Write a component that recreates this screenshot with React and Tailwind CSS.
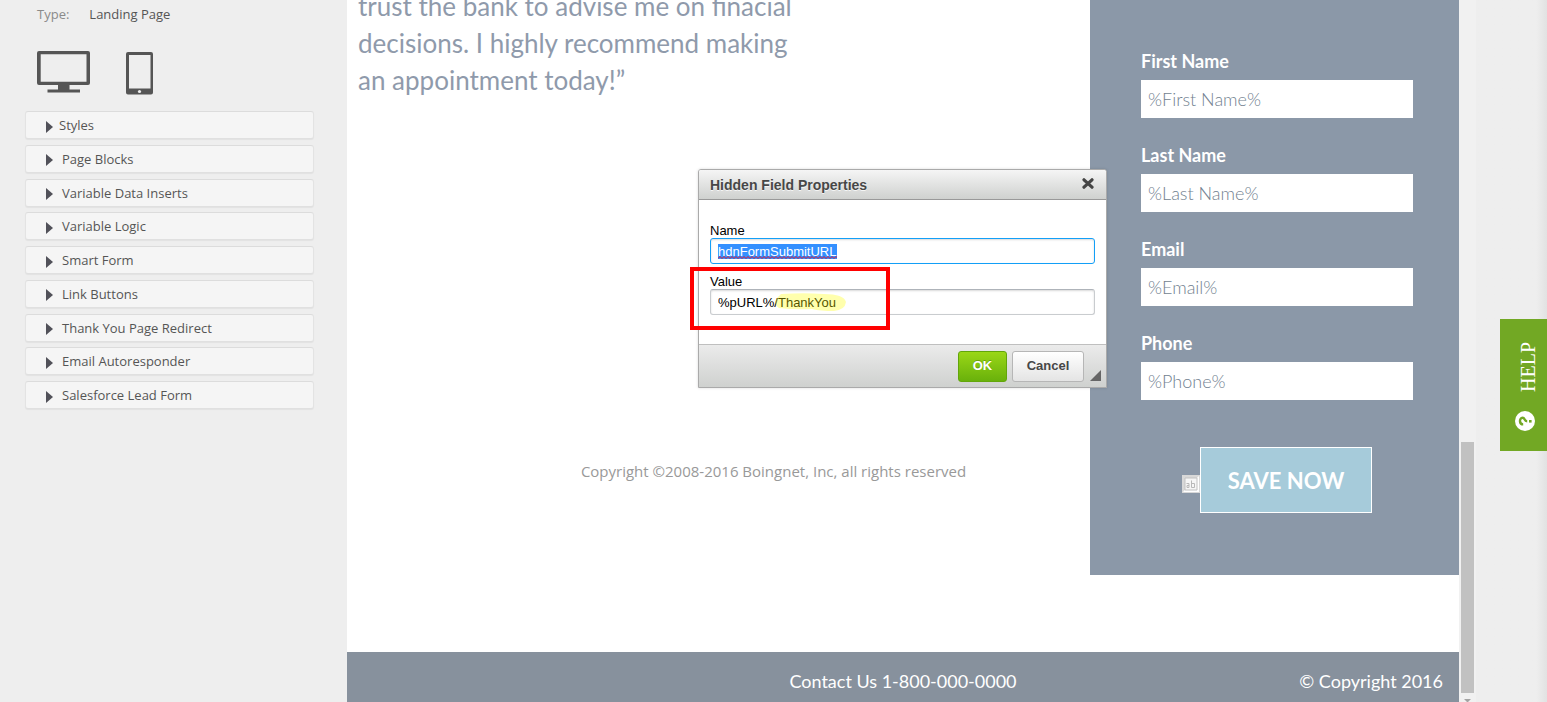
import { useEffect, useRef } from "react";

const blocks = [
  "Page Blocks",
  "Variable Data Inserts",
  "Variable Logic",
  "Smart Form",
  "Link Buttons",
  "Thank You Page Redirect",
  "Email Autoresponder",
  "Salesforce Lead Form",
];

const fields = [
  { id: "first", label: "First Name" },
  { id: "last", label: "Last Name" },
  { id: "email", label: "Email" },
  { id: "phone", label: "Phone" },
];

const squiggle = "M0 2.5" + "l2-2 2 2".repeat(30);

function BlockRow({ label, gap }) {
  return (
    <button
      type="button"
      className={`flex h-[28px] w-full items-center rounded-[3px] border border-t-[#dcdcdc] border-x-[#e3e3e3] border-b-[#e0e0e0] bg-[#f5f5f5] pl-5 text-left shadow-[0_1px_1px_rgba(0,0,0,0.05)] ${gap}`}
    >
      <svg className="mt-[3px] h-3 w-[7px]" viewBox="0 0 7 12" fill="#515159" aria-hidden="true">
        <path d="M0 0 7 6 0 12z" />
      </svg>
      <span>{label}</span>
    </button>
  );
}

function Sidebar() {
  return (
    <aside className="w-[347px] shrink-0 bg-[#eeeeee] pt-1 pr-[33px] pl-[25px] font-['Open_Sans',sans-serif] text-[13px] leading-5 text-[#555]">
      <dl className="flex gap-5 pl-3">
        <dt className="text-[#8a8a8a]">Type:</dt>
        <dd>Landing Page</dd>
      </dl>
      <div className="mt-[26px] flex items-start gap-9 pl-3">
        <button type="button" aria-label="Desktop view">
          <svg className="h-[45px] w-[53px]" viewBox="0 0 53 45" fill="#555">
            <path
              fillRule="evenodd"
              d="M2 1h49a2 2 0 0 1 2 2v30a2 2 0 0 1-2 2H32.500v4.500H43v3H10.500v-3H21v-4.500H2a2 2 0 0 1-2-2V3a2 2 0 0 1 2-2zM3.700 4.300v27.400h45.800V4.300z"
            />
          </svg>
        </button>
        <button type="button" aria-label="Mobile view">
          <svg className="h-[45px] w-[27px]" viewBox="0 0 27 45" fill="#555">
            <path
              fillRule="evenodd"
              d="M2 2h23a2 2 0 0 1 2 2v38.500a2 2 0 0 1-2 2H2a2 2 0 0 1-2-2V4a2 2 0 0 1 2-2zM3 5v33.500h21.500V5z"
            />
            <circle cx="13.500" cy="41.500" r="1.600" fill="#eee" />
          </svg>
        </button>
      </div>
      <nav className="mt-4 flex h-[298px] flex-col justify-between">
        <BlockRow label="Styles" gap="gap-1.5" />
        {blocks.map((b) => (
          <BlockRow key={b} label={b} gap="gap-[9px]" />
        ))}
      </nav>
    </aside>
  );
}

function Dialog() {
  const nameRef = useRef(null);
  useEffect(() => {
    nameRef.current.focus();
    nameRef.current.select();
  }, []);
  return (
    <section
      role="dialog"
      aria-labelledby="dlg-title"
      className="absolute top-[169px] left-1/2 w-[409px] -translate-x-[205px] rounded-t-[3px] border border-[#aaa] bg-white font-['Liberation_Sans',sans-serif] text-[13px] text-black shadow-[0_0_3px_rgba(0,0,0,0.15)]"
    >
      <header className="flex h-[30px] items-center justify-between rounded-t-[2px] border-b border-[#999] bg-linear-to-b from-[#f5f5f5] to-[#cfd1cf] pr-3 pl-[11px]">
        <h2 id="dlg-title" className="pt-0.5 text-[14px] font-bold text-[#474747] [text-shadow:0_1px_0_rgba(255,255,255,0.75)]">
          Hidden Field Properties
        </h2>
        <button type="button" aria-label="Close" className="pb-0.5">
          <svg className="h-[11px] w-[12px]" viewBox="0 0 12 11" stroke="#444" strokeWidth="3.200" strokeLinecap="round">
            <path d="M2 1.800 10 9.200M10 1.800 2 9.200" />
          </svg>
        </button>
      </header>
      <div className="px-[11px] pt-[22px] pb-[29px]">
        <label htmlFor="dlg-name" className="block h-4 leading-[18px]">Name</label>
        <div className="relative">
          <input
            id="dlg-name"
            ref={nameRef}
            spellCheck={false}
            defaultValue="hdnFormSubmitURL"
            className="block h-[26px] w-full rounded-[3px] border border-[#139ff7] px-[7px] shadow-[inset_0_1px_2px_rgba(0,0,0,0.15)] outline-none selection:bg-[#3390ff] selection:text-white"
          />
          <svg className="absolute top-[18px] left-2 h-[3px] w-[119px]" viewBox="0 0 119 3" fill="none" stroke="#e0102a" aria-hidden="true">
            <path d={squiggle} />
          </svg>
        </div>
        <label htmlFor="dlg-value" className="mt-[9px] block h-4 leading-[18px]">Value</label>
        <div className="relative">
          <input
            id="dlg-value"
            defaultValue="%pURL%/ThankYou"
            className="block h-[26px] w-full rounded-[3px] border border-[#c9cccf] border-t-[#aeb3b9] px-[7px] shadow-[inset_0_1px_2px_rgba(0,0,0,0.15)] outline-none"
          />
          <svg className="pointer-events-none absolute top-1 left-16 h-[19px] w-[73px]" viewBox="0 0 73 19" fill="#ffff00" fillOpacity="0.32" aria-hidden="true">
            <path d="M7 1Q30-.5 50 1 70 1 72 9 71 17 60 18 46 18 38 16 20 17 5 15-1 11 3 5z" />
          </svg>
          <div className="pointer-events-none absolute -top-[22px] -left-5 h-[63px] w-[200px] border-4 border-[#ff0000]" />
        </div>
      </div>
      <footer className="relative flex h-[43px] items-center justify-end gap-[5px] border-t border-[#bfbfbf] bg-linear-to-b from-[#ebebeb] to-[#cfd1cf] pr-[22px] font-bold">
        <button type="button" className="h-[31px] w-[49px] rounded-[3px] border border-[#62a60a] bg-linear-to-b from-[#9ad717] to-[#69b10b] text-white [text-shadow:0_-1px_0_rgba(55,95,10,0.4)]">
          OK
        </button>
        <button type="button" className="h-[31px] w-[72px] rounded-[3px] border border-[#b6b6b6] bg-linear-to-b from-white to-[#e4e4e4] text-[#474747]">
          Cancel
        </button>
        <svg className="absolute right-[5px] bottom-[6px] h-[11px] w-[11px]" viewBox="0 0 11 11" fill="#666" aria-hidden="true">
          <path d="M11 0v11H0z" />
        </svg>
      </footer>
    </section>
  );
}

function HiddenFieldIcon() {
  return (
    <svg className="h-[18px] w-[18px]" viewBox="0 0 18 18" role="img" aria-label="Hidden field">
      <path d="M0 0h18v18H0z" fill="#d8d8d8" />
      <path d="M17 1v16H1l2-2h12V3z" fill="#fff" />
      <path d="M3 3h12v12H3z" fill="#f6f6f6" stroke="#c2c2c2" />
      <g fill="none" stroke="#b9b9b9">
        <path d="M4.500 8.500H7V12.500H5V10.500H7" />
        <path d="M9.500 5.500V12.500H12.500V8.500H9.500" />
      </g>
    </svg>
  );
}

export default function App() {
  return (
    <div className="flex min-h-screen overflow-hidden bg-[#eeeeee] font-['Lato',sans-serif]">
      <Sidebar />
      <main className="relative flex min-w-0 flex-1 flex-col bg-white">
        <div className="flex flex-1 items-start">
          <div className="min-w-0 flex-1">
            <blockquote className="-mt-3 w-[460px] pl-[11px] text-[26px] leading-[37px] text-[#8f9aab]">
              trust the bank to advise me on finacial decisions. I highly recommend making an appointment today!”
            </blockquote>
            <p className="mt-[362px] pl-[110px] text-center font-['Open_Sans',sans-serif] text-[15px] leading-5 text-[#999]">
              Copyright ©2008-2016 Boingnet, Inc, all rights reserved
            </p>
          </div>
          <form className="w-[369px] shrink-0 bg-[#8b98a8] px-[51px] pt-[50px] pb-[62px] text-[18px]" onSubmit={(e) => e.preventDefault()}>
            <div className="flex flex-col gap-[26px]">
              {fields.map((f) => (
                <div key={f.id}>
                  <label htmlFor={f.id} className="block pb-2 leading-[22px] font-bold text-white">{f.label}</label>
                  <input
                    id={f.id}
                    defaultValue={`%${f.label}%`}
                    className="block h-[38px] w-[272px] bg-white px-[7px] font-light text-[#727f90] outline-none"
                  />
                </div>
              ))}
            </div>
            <div className="mt-[47px] flex items-center pl-[41px]">
              <div className="pt-[7px]">
                <HiddenFieldIcon />
              </div>
              <button type="submit" className="h-[66px] w-[172px] border border-white bg-[#a6cbda] text-[22px] font-bold text-white">
                SAVE NOW
              </button>
            </div>
          </form>
        </div>
        <footer className="grid h-[50px] grid-cols-3 items-center bg-[#87919d] px-4 pt-2 text-[18px] text-white">
          <span />
          <span className="text-center">Contact Us 1-800-000-0000</span>
          <span className="text-right">© Copyright 2016</span>
        </footer>
        <Dialog />
      </main>
      <div className="flex w-[17px] shrink-0 flex-col items-center justify-end bg-[#f1f1f1]" aria-hidden="true">
        <div className="h-[251px] w-[13px] bg-[#c1c1c1]" />
        <svg className="mt-1.5 h-[3px] w-[7px]" viewBox="0 0 7 3" fill="#a3a3a3">
          <path d="M0 0h7L4 3H3z" />
        </svg>
      </div>
      <div className="w-[71px] shrink-0 bg-linear-to-r from-[#eeeeee] from-85% to-[#e2e2e2]" />
      <button
        type="button"
        className="fixed top-[319px] right-0 flex h-[132px] w-[47px] flex-col items-center gap-[19px] bg-[#72a824] pt-[23px] pl-[3px] font-['Liberation_Serif',serif] text-[20px] leading-[22px] text-white"
      >
        <span className="ml-1.5 rotate-180 [writing-mode:vertical-rl]">HELP</span>
        <svg className="h-5 w-5" viewBox="0 0 20 20" aria-hidden="true">
          <circle cx="10" cy="10" r="10" fill="#fff" />
          <path d="M8.200 13.400C4 13.400 4 6.800 7.600 6.800 10.200 6.800 8.800 10.200 12.200 10.200" fill="none" stroke="#72a824" strokeWidth="2.400" />
          <path d="M14 9h2.600v2.600H14z" fill="#72a824" />
        </svg>
      </button>
    </div>
  );
}
